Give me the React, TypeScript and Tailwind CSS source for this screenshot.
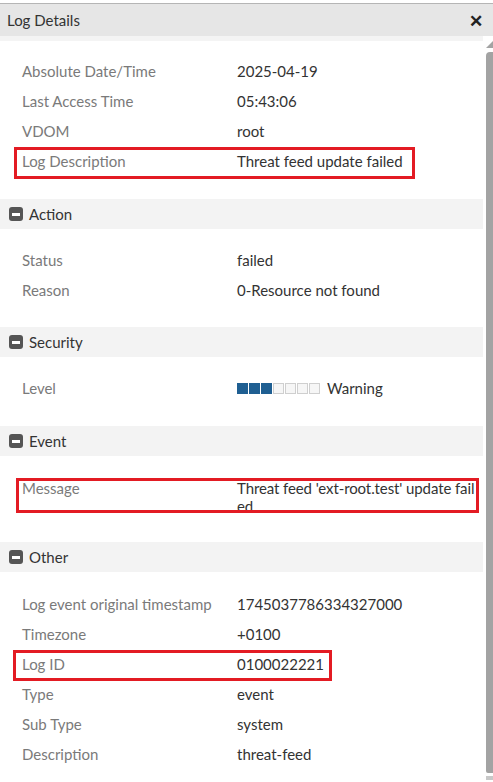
import type { ReactNode } from "react";

type Row = { label: string; value: ReactNode; boxed?: boolean };

function SectionHeader({ title }: { title: string }) {
  return (
    <div className="flex h-[30px] items-center bg-[#f3f3f3] pl-[9px]">
      <span className="flex h-[14px] w-[14px] items-center justify-center rounded-[3px] bg-[#555]">
        <span className="h-[3px] w-[8px] bg-white" />
      </span>
      <span className="ml-[6px] text-[15px] text-[#333]">{title}</span>
    </div>
  );
}

function DetailRow({ label, value, boxed }: Row) {
  return (
    <div className="relative flex h-[30px] items-center pl-[22px]">
      <div className="w-[215px] shrink-0 text-[15px] text-[#7a7a7a]">{label}</div>
      <div className="text-[15px] text-[#333]">{value}</div>
      {boxed && (
        <div className="pointer-events-none absolute left-[14px] top-[1px] h-[32px] w-[401px] border-[3px] border-[#e31b23]" />
      )}
    </div>
  );
}

function Level() {
  return (
    <span className="flex items-center">
      <span className="flex gap-px">
        {[0, 1, 2, 3, 4, 5, 6].map((i) => (
          <span
            key={i}
            className={
              i < 3
                ? "h-[11px] w-[11px] bg-[#1f5f92]"
                : "h-[11px] w-[11px] border border-[#cfcfcf] bg-[#f6f6f6]"
            }
          />
        ))}
      </span>
      <span className="ml-[7px]">Warning</span>
    </span>
  );
}

export default function App() {
  const general: Row[] = [
    { label: "Absolute Date/Time", value: "2025-04-19" },
    { label: "Last Access Time", value: "05:43:06" },
    { label: "VDOM", value: "root" },
    { label: "Log Description", value: "Threat feed update failed", boxed: true },
  ];
  const other: Row[] = [
    { label: "Log event original timestamp", value: "1745037786334327000" },
    { label: "Timezone", value: "+0100" },
    { label: "Log ID", value: "0100022221" },
    { label: "Type", value: "event" },
    { label: "Sub Type", value: "system" },
    { label: "Description", value: "threat-feed" },
  ];

  return (
    <div className="h-[782px] w-[493px] overflow-hidden bg-white font-['Lato','Liberation_Sans',sans-serif]">
      <div className="h-[3px] bg-white" />
      <div className="flex h-[33px] items-center justify-between border-t border-[#b5b5b5] bg-[#e6e6e6] pl-[7px] pr-[10px]">
        <span className="text-[15px] text-[#333]">Log Details</span>
        <span className="text-[17px] font-bold leading-none text-[#222]">✕</span>
      </div>
      <div className="flex">
        <div className="w-[483px] shrink-0">
          <div className="h-[5px] bg-[#f4f4f4]" />
          <div className="pb-[23px] pt-[15px]">
            {general.map((r) => (
              <DetailRow key={r.label} {...r} />
            ))}
          </div>

          <SectionHeader title="Action" />
          <div className="pb-[22px] pt-[16px]">
            <DetailRow label="Status" value="failed" />
            <DetailRow label="Reason" value="0-Resource not found" />
          </div>

          <SectionHeader title="Security" />
          <div className="pb-[23px] pt-[16px]">
            <DetailRow label="Level" value={<Level />} />
          </div>

          <SectionHeader title="Event" />
          <div className="pb-[21px] pt-[17px]">
            <div className="relative flex py-[6px] pl-[22px] text-[15px] leading-[18px]">
              <div className="w-[215px] shrink-0 text-[#7a7a7a]">Message</div>
              <div className="w-[244px] shrink-0 break-all tracking-[-0.1px] text-[#333]">
                Threat feed 'ext-root.test' update failed
              </div>
              <div className="pointer-events-none absolute left-[16px] top-[5px] h-[35px] w-[463px] border-[3px] border-[#e31b23]" />
            </div>
          </div>

          <SectionHeader title="Other" />
          <div className="pt-[17px]">
            {other.map((r) => (
              <div key={r.label} className="relative">
                <DetailRow label={r.label} value={r.value} />
                {r.label === "Log ID" && (
                  <div className="pointer-events-none absolute left-[13px] top-[1px] h-[31px] w-[319px] border-[3px] border-[#e31b23]" />
                )}
              </div>
            ))}
          </div>
        </div>

        <div className="flex w-[10px] flex-col items-end">
          <svg width="7" height="7" viewBox="0 0 7 7" className="mt-[5px]">
            <polygon points="7,0 7,7 0,7" fill="#a3a3a3" />
          </svg>
          <div className="mt-[4px] h-[721px] w-[7px] rounded-tl-[4px] rounded-bl-[2px] bg-[#a3a3a3]" />
          <div className="mt-[3px] h-[4px] w-[7px] bg-[#c8c8c8]" />
        </div>
      </div>
    </div>
  );
}
